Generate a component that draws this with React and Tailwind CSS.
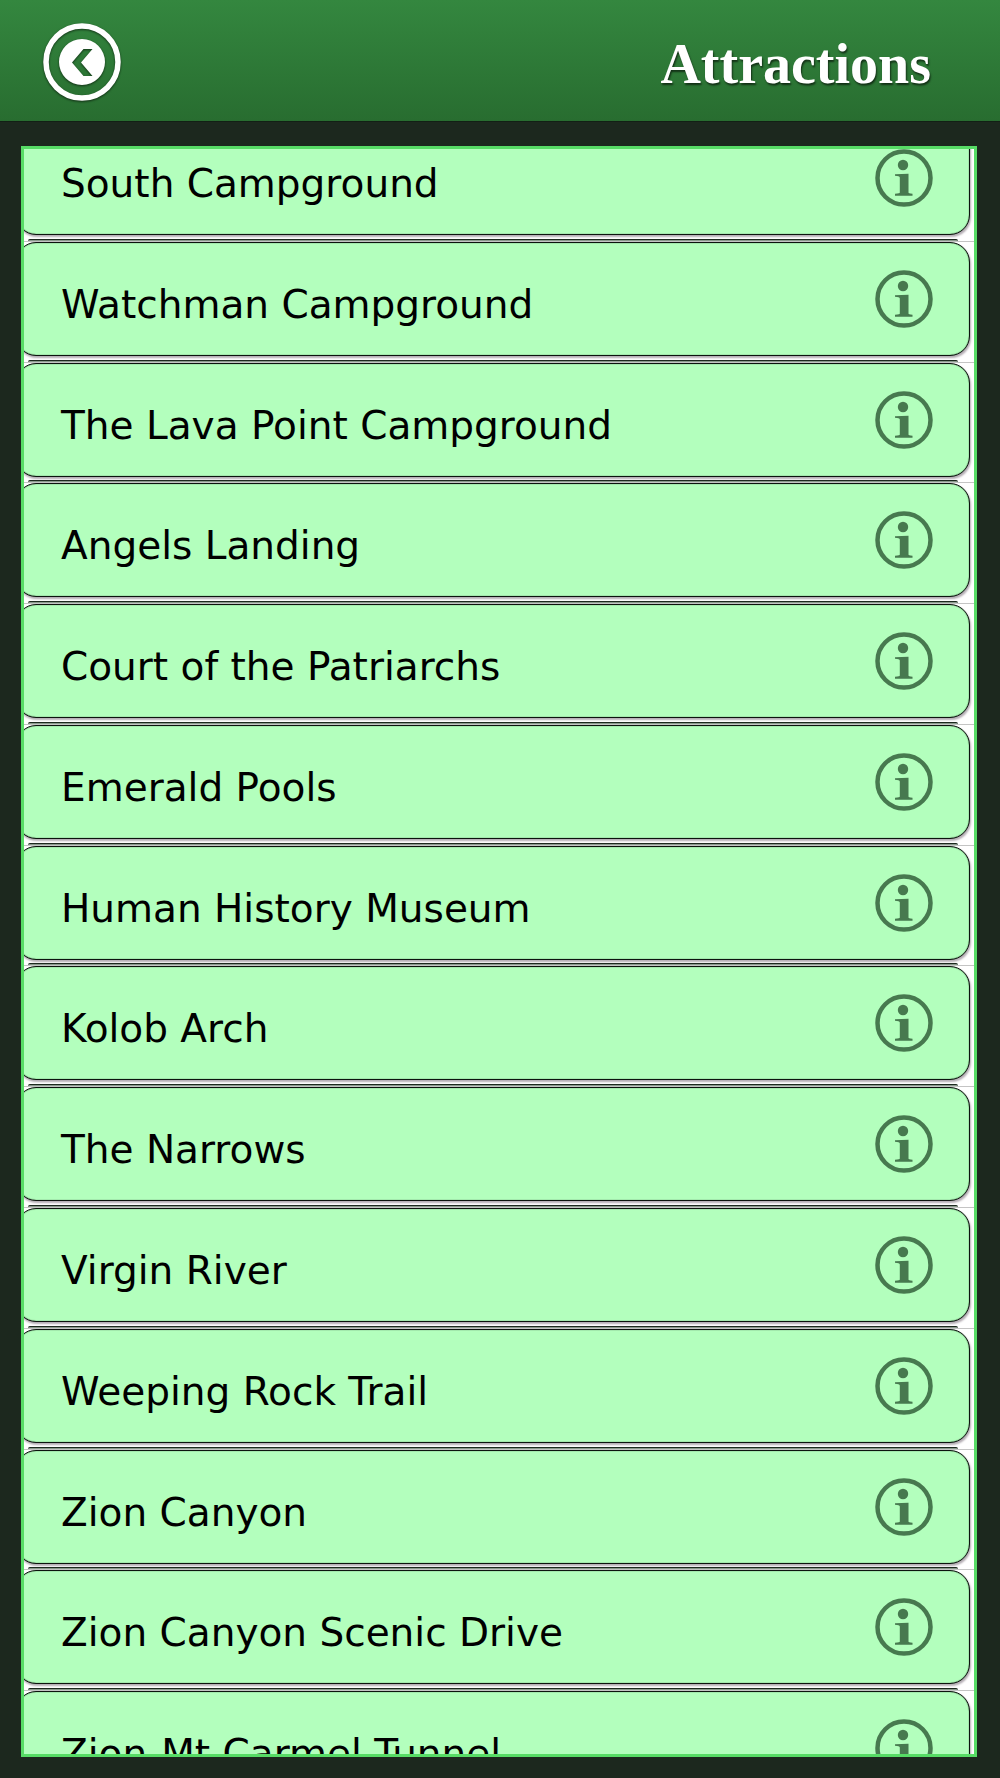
import React from 'react'

const attractions = [
  'South Campground',
  'Watchman Campground',
  'The Lava Point Campground',
  'Angels Landing',
  'Court of the Patriarchs',
  'Emerald Pools',
  'Human History Museum',
  'Kolob Arch',
  'The Narrows',
  'Virgin River',
  'Weeping Rock Trail',
  'Zion Canyon',
  'Zion Canyon Scenic Drive',
  'Zion-Mt Carmel Tunnel',
]

function BackIcon() {
  return (
    <svg
      viewBox="0 0 80 80"
      className="h-20 w-20 drop-shadow-[0_1px_1px_rgba(0,0,0,0.6)]"
    >
      <circle cx="40" cy="40" r="36" fill="none" stroke="#fff" strokeWidth="5.5" />
      <path
        fill="#fff"
        fillRule="evenodd"
        d="M40 17a23 23 0 1 1 0 46a23 23 0 1 1 0-46ZM30 40.500L41.500 54H50.500L39 40.500L50.500 27H41.500Z"
      />
    </svg>
  )
}

function InfoIcon() {
  return (
    <svg viewBox="0 0 58 58" className="h-[58px] w-[58px]" fill="#47794f">
      <circle cx="29" cy="29" r="26.500" fill="none" stroke="#47794f" strokeWidth="4.500" />
      <circle cx="28" cy="16" r="5.200" />
      <path d="M20 25.200L33.500 24.800V43.500C33.500 44.300 34.500 44.600 37.500 44.800V46.800H20V44.800C23.500 44.600 24.800 44.300 24.800 43.500V28.500C24.800 27.300 23 27 20 26.800Z" />
    </svg>
  )
}

function AttractionRow({ name }) {
  return (
    <li className="flex flex-1 flex-col justify-between overflow-hidden border-b border-[#c4c4c4] bg-white">
      <div className="-ml-2 mr-1 flex h-[114px] shrink-0 items-center justify-between rounded-[20px] border border-[#0c140e] bg-[#b3ffbd] pl-11 pr-9 shadow-[inset_0_0_1px_rgba(12,20,14,0.9),1px_2px_2px_rgba(40,20,40,0.35)]">
        <span className="pt-3 text-[39px] leading-[48px] text-black">
          {name}
        </span>
        <button type="button" aria-label={`About ${name}`}>
          <InfoIcon />
        </button>
      </div>
      {/* top edge of the card stacked underneath */}
      <div className="ml-1 mr-4 h-[2px] shrink-0 rounded-t-[20px] border-t border-[#1c281e] bg-[#8a9a8c]" />
    </li>
  )
}

export default function App() {
  return (
    <div className="flex h-screen flex-col bg-[#1c281e] font-['DejaVu_Sans',sans-serif]">
      <header className="flex h-[122px] shrink-0 items-center justify-between border-b border-[#122015] bg-linear-to-b from-[#34873f] to-[#286d30] pl-[42px] pr-[69px]">
        <button type="button" aria-label="Back" className="pt-[2px]">
          <BackIcon />
        </button>
        <h1 className="pt-[6px] font-['Liberation_Serif',serif] text-[56px] font-bold leading-[64px] text-white [text-shadow:1px_2px_2px_rgba(0,0,0,0.6)]">
          Attractions
        </h1>
      </header>

      <main className="flex min-h-0 flex-1 pb-[21px] pl-[21px] pr-[23px] pt-6">
        <div className="flex-1 overflow-hidden border-[3px] border-[#57dc66] bg-white">
          <ul className="-mt-7 flex h-[1691px] flex-col">
            {attractions.map((name) => (
              <AttractionRow key={name} name={name} />
            ))}
          </ul>
        </div>
      </main>
    </div>
  )
}
